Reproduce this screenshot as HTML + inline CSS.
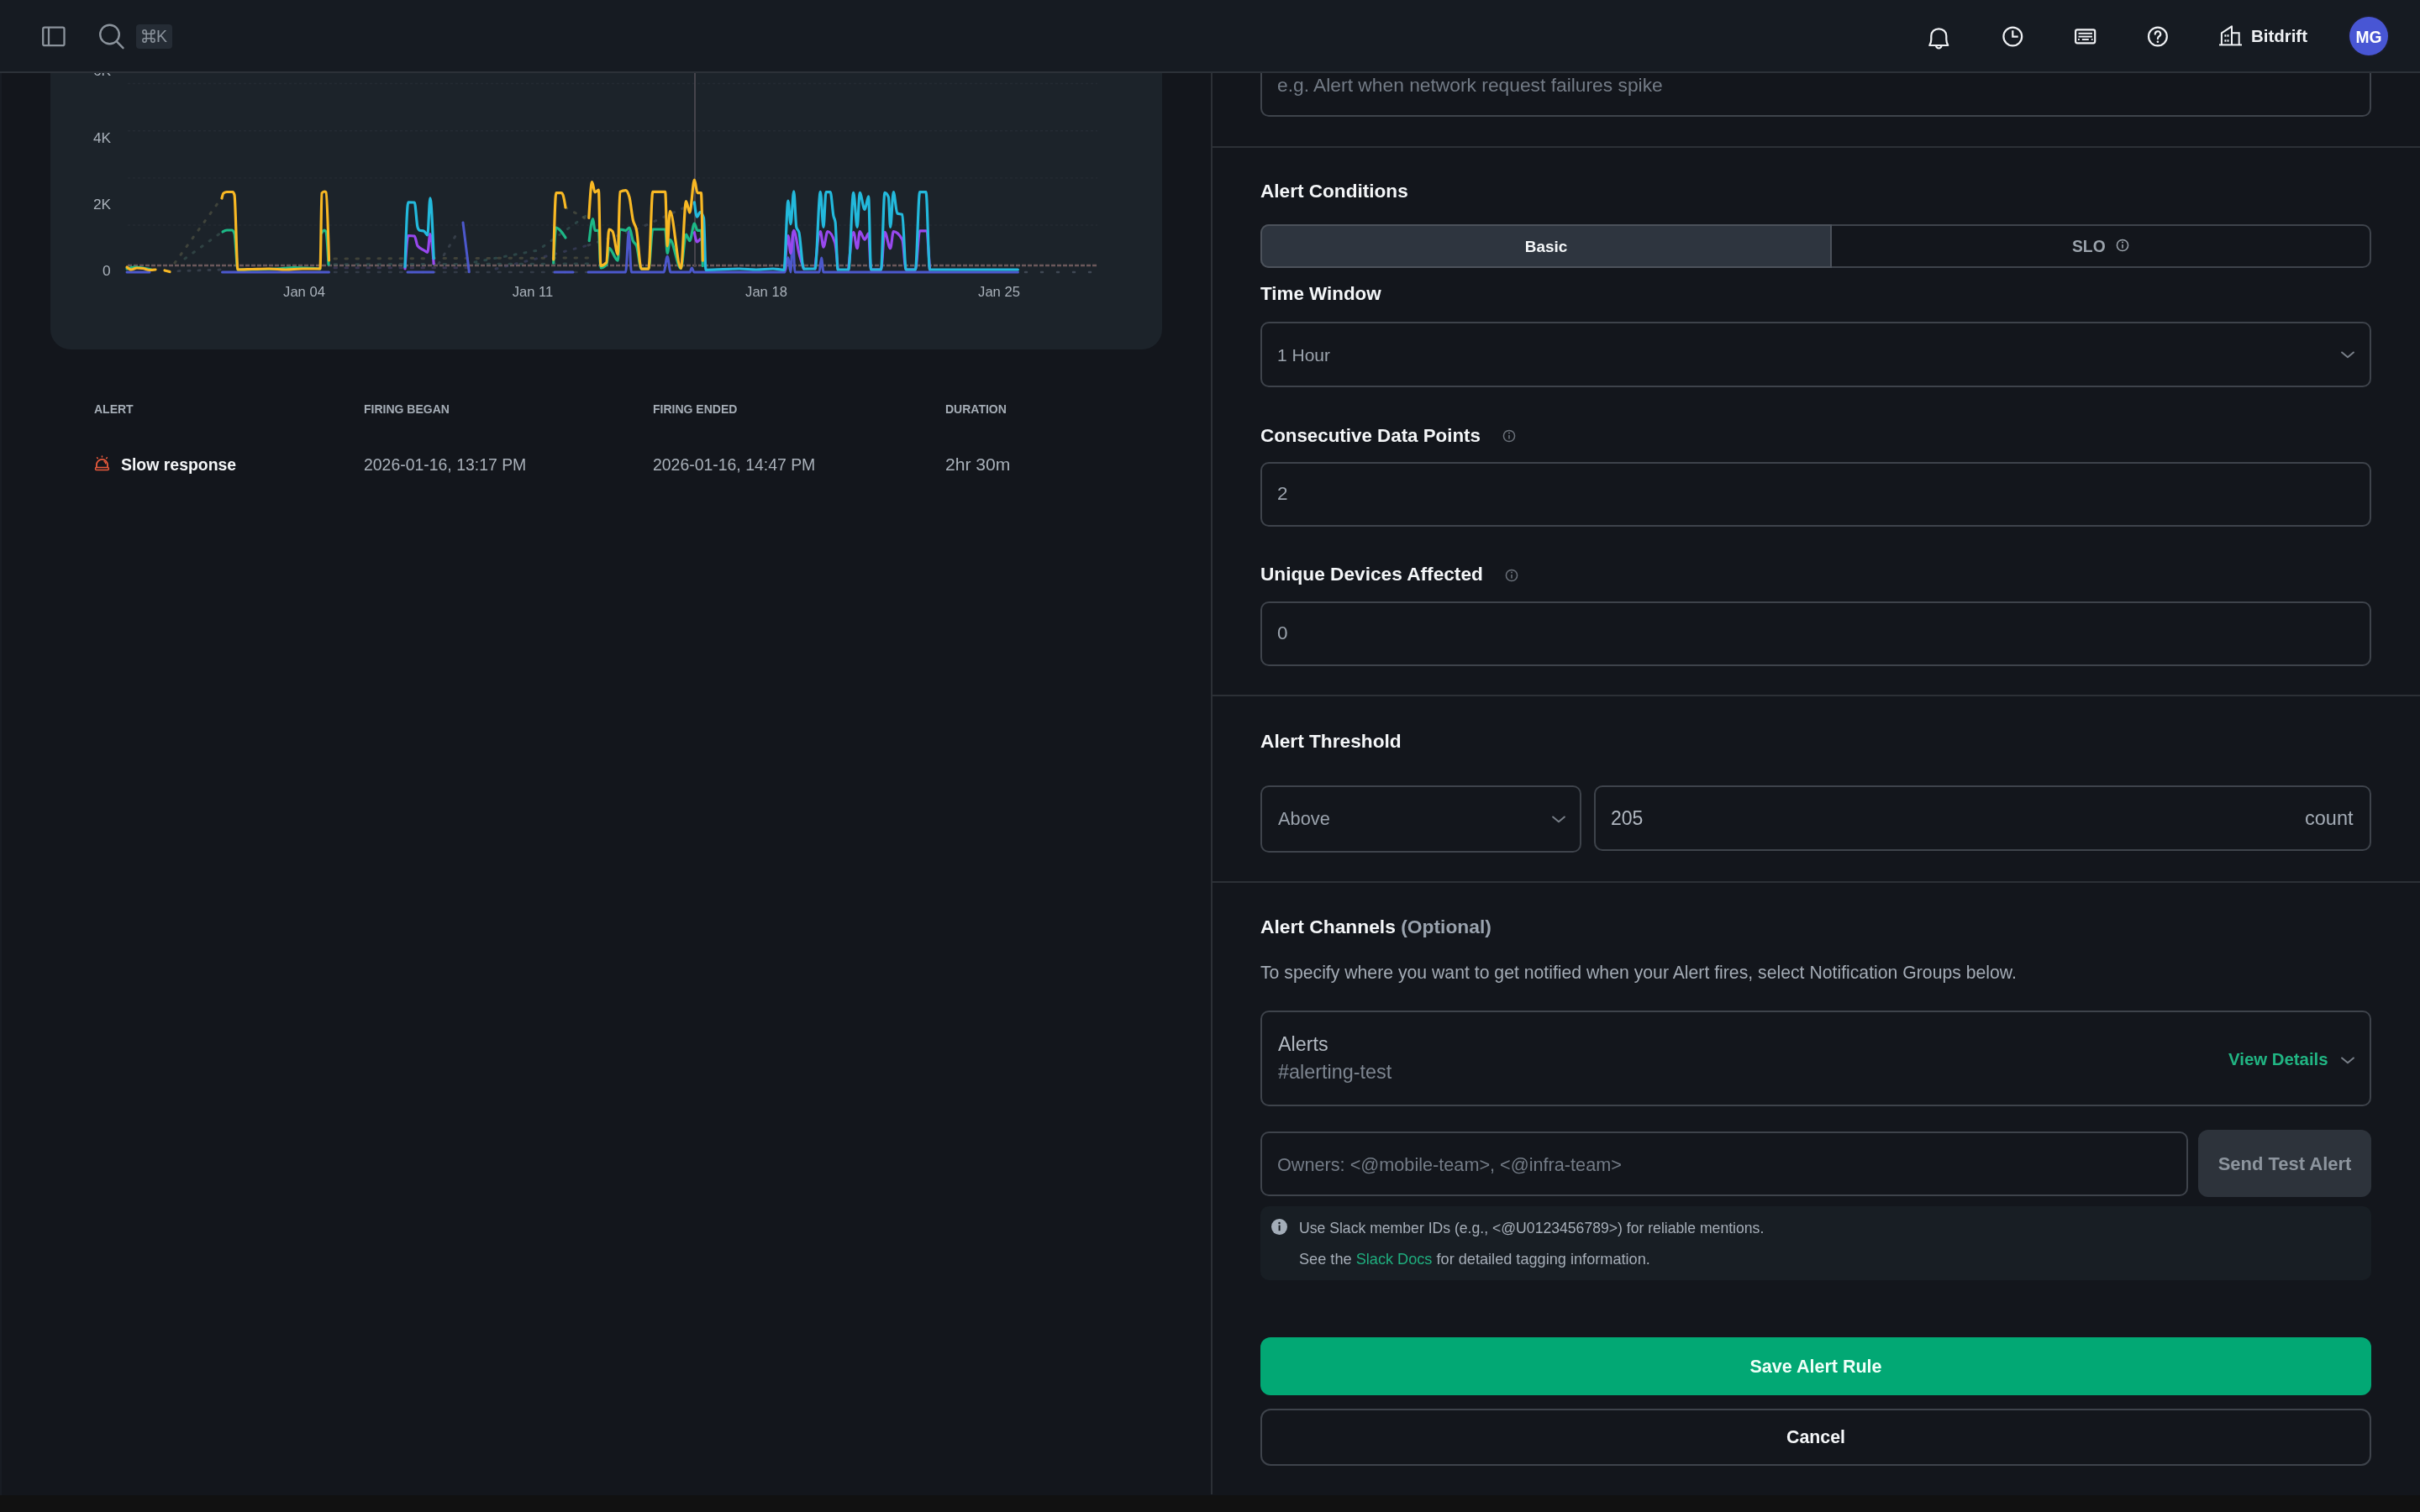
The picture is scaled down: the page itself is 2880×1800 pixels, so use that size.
<!DOCTYPE html>
<html><head><meta charset="utf-8"><style>
html,body{margin:0;padding:0;}
body{width:2880px;height:1800px;overflow:hidden;position:relative;background:#13161c;font-family:"Liberation Sans",sans-serif;}
.t{position:absolute;white-space:nowrap;line-height:1;will-change:transform;}
svg{position:absolute;overflow:visible;}
@media (max-width:2000px){html{zoom:0.5;}}
</style></head><body>
<div style="position:absolute;left:59.5px;top:-100px;width:1323.5px;height:516px;box-sizing:border-box;background:#1c232a;border-radius:24px;"></div>
<svg style="left:0;top:0" width="2880" height="1800" viewBox="0 0 2880 1800">
<line x1="152" y1="99.5" x2="1306" y2="99.5" stroke="#242b33" stroke-width="1.4" stroke-dasharray="3 3"/>
<line x1="152" y1="155.7" x2="1306" y2="155.7" stroke="#242b33" stroke-width="1.4" stroke-dasharray="3 3"/>
<line x1="152" y1="211.9" x2="1306" y2="211.9" stroke="#242b33" stroke-width="1.4" stroke-dasharray="3 3"/>
<line x1="152" y1="268" x2="1306" y2="268" stroke="#242b33" stroke-width="1.4" stroke-dasharray="3 3"/>
<line x1="152" y1="316" x2="1306" y2="316" stroke="#6b585b" stroke-width="2.3" stroke-dasharray="5 2"/>
<line x1="827" y1="86" x2="827" y2="318" stroke="#46444c" stroke-width="2"/>
<polyline points="208,313 262,238" fill="none" stroke="#5c5e48" stroke-width="3" stroke-linejoin="round" stroke-linecap="round" stroke-dasharray="2 10" opacity="0.55"/>
<polyline points="220,308 263,277" fill="none" stroke="#3f5c58" stroke-width="3" stroke-linejoin="round" stroke-linecap="round" stroke-dasharray="2 10" opacity="0.55"/>
<polyline points="200,323 264,321" fill="none" stroke="#4a5362" stroke-width="3" stroke-linejoin="round" stroke-linecap="round" stroke-dasharray="2 10" opacity="0.55"/>
<polyline points="398,308 700,307" fill="none" stroke="#5f5d45" stroke-width="3" stroke-linejoin="round" stroke-linecap="round" stroke-dasharray="2.5 10.5" opacity="0.55"/>
<polyline points="398,314.8 700,314" fill="none" stroke="#3c5f5c" stroke-width="3" stroke-linejoin="round" stroke-linecap="round" stroke-dasharray="2.5 10.5" opacity="0.55"/>
<polyline points="398,318.8 560,318.8" fill="none" stroke="#4f4670" stroke-width="3" stroke-linejoin="round" stroke-linecap="round" stroke-dasharray="2.5 10.5" opacity="0.55"/>
<polyline points="398,324 700,324" fill="none" stroke="#464f5c" stroke-width="2.6" stroke-linejoin="round" stroke-linecap="round" stroke-dasharray="2.5 10.5" opacity="0.55"/>
<polyline points="522,314 545,276" fill="none" stroke="#4a5461" stroke-width="3" stroke-linejoin="round" stroke-linecap="round" stroke-dasharray="2 10" opacity="0.55"/>
<polyline points="565,312 640,298 700,255" fill="none" stroke="#3b625e" stroke-width="3" stroke-linejoin="round" stroke-linecap="round" stroke-dasharray="2 10" opacity="0.55"/>
<polyline points="590,320 650,305 700,292" fill="none" stroke="#45496e" stroke-width="3" stroke-linejoin="round" stroke-linecap="round" stroke-dasharray="2 10" opacity="0.55"/>
<polyline points="700,292 760,272 830,240" fill="none" stroke="#4a5461" stroke-width="3" stroke-linejoin="round" stroke-linecap="round" stroke-dasharray="2 10" opacity="0.55"/>
<polyline points="673,247 700,262" fill="none" stroke="#5c5e48" stroke-width="3" stroke-linejoin="round" stroke-linecap="round" stroke-dasharray="2 10" opacity="0.55"/>
<polyline points="1220,324 1300,324" fill="none" stroke="#566170" stroke-width="2.5" stroke-linejoin="round" stroke-linecap="round" stroke-dasharray="2 17" opacity="0.6"/>
<path d="M151.00,324.00 L178.00,324.00" fill="none" stroke="#4c58cc" stroke-width="3.0" stroke-linejoin="round" stroke-linecap="round" />
<path d="M264.50,324.00 L391.50,324.00" fill="none" stroke="#4c58cc" stroke-width="3.0" stroke-linejoin="round" stroke-linecap="round" />
<path d="M485.00,324.00 L516.00,324.00" fill="none" stroke="#4c58cc" stroke-width="3.0" stroke-linejoin="round" stroke-linecap="round" />
<path d="M551.00,265.00 L558.30,323.80" fill="none" stroke="#4c58cc" stroke-width="3.0" stroke-linejoin="round" stroke-linecap="round" />
<path d="M660.00,324.00 L682.00,324.00" fill="none" stroke="#4c58cc" stroke-width="3.0" stroke-linejoin="round" stroke-linecap="round" />
<path d="M700.00,324.00 C714.87,324.00 729.73,324.00 744.60,324.00 C745.83,324.00 747.07,275.50 748.30,275.50 C749.33,275.50 750.37,324.00 751.40,324.00 C764.27,324.00 777.13,324.00 790.00,324.00 C791.40,324.00 792.80,305.20 794.20,305.20 C795.47,305.20 796.73,324.00 798.00,324.00 C805.67,324.00 813.33,324.00 821.00,324.00 C821.77,324.00 822.53,319.00 823.30,319.00 C824.20,319.00 825.10,324.00 826.00,324.00 C862.00,324.00 898.00,324.00 934.00,324.00 C935.30,324.00 936.60,306.50 937.90,306.50 C938.93,306.50 939.97,324.00 941.00,324.00 C941.83,324.00 942.67,276.00 943.50,276.00 C944.33,276.00 945.17,324.00 946.00,324.00 C955.67,324.00 965.33,324.00 975.00,324.00 C975.87,324.00 976.73,307.00 977.60,307.00 C978.40,307.00 979.20,324.00 980.00,324.00 C1057.13,324.00 1134.27,324.00 1211.40,324.00" fill="none" stroke="#4c58cc" stroke-width="3.0" stroke-linejoin="round" stroke-linecap="round" />
<path d="M482.00,320.00 C483.27,300.25 484.53,280.50 485.80,280.50 C488.30,280.50 490.80,280.67 493.30,281.00 C494.53,281.16 495.77,291.13 497.00,292.80 C499.47,296.13 501.93,296.30 504.40,297.80 C505.87,298.69 507.33,300.30 508.80,300.30 C509.83,300.30 510.87,278.60 511.90,278.60 C513.33,278.60 514.77,296.30 516.20,314.00" fill="none" stroke="#9848ee" stroke-width="3.2" stroke-linejoin="round" stroke-linecap="round" />
<path d="M826.40,276.70 C827.43,282.30 828.47,287.90 829.50,287.90 C830.73,287.90 831.97,286.35 833.20,284.80" fill="none" stroke="#9848ee" stroke-width="3.2" stroke-linejoin="round" stroke-linecap="round" />
<path d="M934.00,321.00 C935.30,300.75 936.60,280.50 937.90,280.50 C938.93,280.50 939.97,301.50 941.00,301.50 C942.23,301.50 943.47,274.30 944.70,274.30 C946.77,274.30 948.83,293.61 950.90,301.50 C952.77,308.63 954.63,314.31 956.50,320.00" fill="none" stroke="#9848ee" stroke-width="3.2" stroke-linejoin="round" stroke-linecap="round" />
<path d="M970.00,320.00 C972.10,297.75 974.20,275.50 976.30,275.50 C977.53,275.50 978.77,294.10 980.00,294.10 C981.67,294.10 983.33,275.50 985.00,275.50 C987.90,275.50 990.80,280.03 993.70,289.10 C994.83,292.64 995.97,306.32 997.10,320.00" fill="none" stroke="#9848ee" stroke-width="3.2" stroke-linejoin="round" stroke-linecap="round" />
<path d="M1009.80,321.00 C1011.77,298.65 1013.73,276.30 1015.70,276.30 C1017.20,276.30 1018.70,295.70 1020.20,295.70 C1021.20,295.70 1022.20,275.60 1023.20,275.60 C1025.17,275.60 1027.13,285.20 1029.10,285.20 C1030.60,285.20 1032.10,277.80 1033.60,277.80 C1034.57,277.80 1035.53,321.00 1036.50,321.00 C1040.50,321.00 1044.50,321.00 1048.50,321.00 C1049.97,321.00 1051.43,276.30 1052.90,276.30 C1055.13,276.30 1057.37,295.70 1059.60,295.70 C1060.83,295.70 1062.07,275.60 1063.30,275.60 C1066.80,275.60 1070.30,278.80 1073.80,285.20 C1075.27,287.88 1076.73,321.00 1078.20,321.00 C1081.93,321.00 1085.67,321.00 1089.40,321.00 C1091.13,321.00 1092.87,274.80 1094.60,274.80 C1097.07,274.80 1099.53,274.80 1102.00,274.80 C1103.50,274.80 1105.00,297.90 1106.50,321.00" fill="none" stroke="#9848ee" stroke-width="3.2" stroke-linejoin="round" stroke-linecap="round" />
<path d="M482.00,317.60 C483.27,279.20 484.53,240.80 485.80,240.80 C488.30,240.80 490.80,240.87 493.30,241.00 C494.53,241.07 495.77,266.75 497.00,270.50 C497.83,273.03 498.67,274.06 499.50,274.30 C501.13,274.77 502.77,274.53 504.40,275.00 C505.87,275.42 507.33,279.80 508.80,279.80 C509.83,279.80 510.87,235.80 511.90,235.80 C513.33,235.80 514.77,271.75 516.20,307.70" fill="none" stroke="#23b9dc" stroke-width="3.2" stroke-linejoin="round" stroke-linecap="round" />
<path d="M826.40,240.80 C827.43,249.50 828.47,258.20 829.50,258.20 C830.73,258.20 831.97,252.60 833.20,252.60 C834.63,252.60 836.07,254.87 837.50,259.40 C838.33,262.04 839.17,321.30 840.00,321.30 C853.33,321.30 866.67,320.00 880.00,320.00 C886.67,320.00 893.33,321.00 900.00,321.00 C906.67,321.00 913.33,320.00 920.00,320.00 C924.33,320.00 928.67,321.30 933.00,321.30 C934.63,321.30 936.27,239.00 937.90,239.00 C938.93,239.00 939.97,266.80 941.00,266.80 C942.23,266.80 943.47,227.80 944.70,227.80 C945.73,227.80 946.77,266.37 947.80,270.50 C948.83,274.63 949.87,272.57 950.90,276.70 C952.77,284.17 954.63,320.10 956.50,320.10 C961.00,320.10 965.50,320.07 970.00,320.00 C972.10,319.97 974.20,228.40 976.30,228.40 C977.53,228.40 978.77,270.50 980.00,270.50 C981.00,270.50 982.00,228.70 983.00,228.70 C984.73,228.70 986.47,228.70 988.20,228.70 C989.43,228.70 990.67,250.88 991.90,257.00 C992.63,260.64 993.37,259.47 994.10,264.40 C995.10,271.13 996.10,321.00 997.10,321.00 C1001.33,321.00 1005.57,321.00 1009.80,321.00 C1011.77,321.00 1013.73,229.40 1015.70,229.40 C1017.20,229.40 1018.70,270.40 1020.20,270.40 C1021.20,270.40 1022.20,229.40 1023.20,229.40 C1025.17,229.40 1027.13,249.50 1029.10,249.50 C1030.60,249.50 1032.10,233.90 1033.60,233.90 C1034.57,233.90 1035.53,321.00 1036.50,321.00 C1040.50,321.00 1044.50,321.00 1048.50,321.00 C1049.97,321.00 1051.43,229.40 1052.90,229.40 C1054.40,229.40 1055.90,231.13 1057.40,234.60 C1058.13,236.29 1058.87,270.40 1059.60,270.40 C1060.83,270.40 1062.07,228.70 1063.30,228.70 C1064.80,228.70 1066.30,253.25 1067.80,254.00 C1069.80,255.00 1071.80,254.50 1073.80,255.50 C1075.27,256.23 1076.73,321.00 1078.20,321.00 C1081.93,321.00 1085.67,321.00 1089.40,321.00 C1091.13,321.00 1092.87,228.70 1094.60,228.70 C1097.07,228.70 1099.53,228.70 1102.00,228.70 C1103.50,228.70 1105.00,321.00 1106.50,321.00 C1141.47,321.00 1176.43,321.00 1211.40,321.00" fill="none" stroke="#23b9dc" stroke-width="3.2" stroke-linejoin="round" stroke-linecap="round" />
<path d="M151.00,320.00 C154.00,319.00 157.00,318.00 160.00,318.00 C163.33,318.00 166.67,318.50 170.00,319.00 C173.33,319.50 176.67,320.25 180.00,321.00" fill="none" stroke="#1db886" stroke-width="3.2" stroke-linejoin="round" stroke-linecap="round" />
<path d="M265.00,276.00 C266.67,275.00 268.33,274.00 270.00,274.00 C272.00,274.00 274.00,274.00 276.00,274.00 C277.00,274.00 278.00,275.33 279.00,278.00 C280.33,281.56 281.67,321.00 283.00,321.00 C298.67,321.00 314.33,320.67 330.00,320.00 C336.67,319.72 343.33,318.50 350.00,318.50 C360.33,318.50 370.67,319.25 381.00,320.00" fill="none" stroke="#1db886" stroke-width="3.2" stroke-linejoin="round" stroke-linecap="round" />
<path d="M383.00,277.00 C384.00,275.50 385.00,274.00 386.00,274.00 C386.67,274.00 387.33,274.67 388.00,276.00 C389.00,278.00 390.00,296.50 391.00,315.00" fill="none" stroke="#1db886" stroke-width="3.2" stroke-linejoin="round" stroke-linecap="round" />
<path d="M658.70,313.00 C659.73,292.00 660.77,271.00 661.80,271.00 C663.47,271.00 665.13,272.65 666.80,274.30 C668.87,276.35 670.93,279.67 673.00,283.00" fill="none" stroke="#1db886" stroke-width="3.2" stroke-linejoin="round" stroke-linecap="round" />
<path d="M701.20,286.70 C702.67,273.65 704.13,260.60 705.60,260.60 C706.40,260.60 707.20,274.30 708.00,274.30 C709.47,274.30 710.93,274.30 712.40,274.30 C713.23,274.30 714.07,318.90 714.90,318.90 C717.17,318.90 719.43,317.67 721.70,315.20 C722.73,314.08 723.77,295.30 724.80,295.30 C728.30,295.30 731.80,310.20 735.30,310.20 C736.13,310.20 736.97,273.00 737.80,273.00 C740.07,273.00 742.33,274.30 744.60,274.30 C746.07,274.30 747.53,271.20 749.00,271.20 C750.43,271.20 751.87,283.08 753.30,286.70 C754.73,290.32 756.17,288.77 757.60,292.90 C759.47,298.28 761.33,320.00 763.20,320.00 C766.10,320.00 769.00,320.00 771.90,320.00 C773.53,320.00 775.17,273.00 776.80,273.00 C781.77,273.00 786.73,273.00 791.70,273.00 C792.53,273.00 793.37,301.50 794.20,301.50 C795.23,301.50 796.27,285.40 797.30,285.40 C801.63,285.40 805.97,319.50 810.30,319.50 C812.37,319.50 814.43,279.20 816.50,279.20 C817.93,279.20 819.37,286.70 820.80,286.70 C822.67,286.70 824.53,266.20 826.40,266.20 C827.63,266.20 828.87,274.30 830.10,274.30 C831.53,274.30 832.97,274.30 834.40,274.30 C835.03,274.30 835.67,295.35 836.30,316.40" fill="none" stroke="#1db886" stroke-width="3.2" stroke-linejoin="round" stroke-linecap="round" />
<path d="M151.00,318.00 C152.67,319.50 154.33,321.00 156.00,321.00 C158.33,321.00 160.67,319.00 163.00,319.00 C165.33,319.00 167.67,319.17 170.00,319.50 C172.67,319.88 175.33,321.50 178.00,321.50 C180.33,321.50 182.67,321.25 185.00,321.00" fill="none" stroke="#f8b824" stroke-width="3.2" stroke-linejoin="round" stroke-linecap="round" />
<path d="M196.00,322.00 L202.00,323.50" fill="none" stroke="#f8b824" stroke-width="3.2" stroke-linejoin="round" stroke-linecap="round" />
<path d="M264.00,236.00 C264.67,233.25 265.33,230.50 266.00,230.00 C267.33,229.00 268.67,228.50 270.00,228.50 C272.33,228.50 274.67,228.50 277.00,228.50 C277.67,228.50 278.33,229.67 279.00,232.00 C280.33,236.67 281.67,321.00 283.00,321.00 C288.67,321.00 294.33,320.66 300.00,320.50 C306.67,320.32 313.33,320.00 320.00,320.00 C326.67,320.00 333.33,321.00 340.00,321.00 C346.67,321.00 353.33,320.00 360.00,320.00 C367.00,320.00 374.00,320.00 381.00,320.00 C381.67,320.00 382.33,230.89 383.00,230.00 C384.00,228.67 385.00,228.00 386.00,228.00 C386.67,228.00 387.33,228.33 388.00,229.00 C389.17,230.17 390.33,270.08 391.50,310.00" fill="none" stroke="#f8b824" stroke-width="3.2" stroke-linejoin="round" stroke-linecap="round" />
<path d="M658.70,309.00 C659.73,269.30 660.77,229.60 661.80,229.60 C663.87,229.60 665.93,229.60 668.00,229.60 C668.67,229.60 669.33,230.40 670.00,232.00 C671.00,234.40 672.00,240.70 673.00,247.00" fill="none" stroke="#f8b824" stroke-width="3.2" stroke-linejoin="round" stroke-linecap="round" />
<path d="M700.80,259.40 C702.07,238.00 703.33,216.60 704.60,216.60 C705.73,216.60 706.87,229.00 708.00,229.00 C709.47,229.00 710.93,226.00 712.40,226.00 C713.23,226.00 714.07,316.40 714.90,316.40 C717.17,316.40 719.43,315.17 721.70,312.70 C722.73,311.58 723.77,273.00 724.80,273.00 C726.20,273.00 727.60,273.83 729.00,275.50 C731.10,278.00 733.20,302.80 735.30,302.80 C736.13,302.80 736.97,228.84 737.80,228.40 C740.07,227.20 742.33,226.60 744.60,226.60 C746.07,226.60 747.53,229.27 749.00,234.60 C750.43,239.81 751.87,255.28 753.30,261.90 C754.73,268.52 756.17,266.87 757.60,274.30 C759.47,283.98 761.33,320.10 763.20,320.10 C766.10,320.10 769.00,320.10 771.90,320.10 C773.53,320.10 775.17,228.40 776.80,228.40 C781.77,228.40 786.73,228.40 791.70,228.40 C792.53,228.40 793.37,292.90 794.20,292.90 C795.23,292.90 796.27,251.30 797.30,251.30 C801.63,251.30 805.97,319.50 810.30,319.50 C812.37,319.50 814.43,239.60 816.50,239.60 C817.93,239.60 819.37,253.20 820.80,253.20 C822.67,253.20 824.53,214.20 826.40,214.20 C827.63,214.20 828.87,229.70 830.10,229.70 C831.53,229.70 832.97,229.70 834.40,229.70 C835.03,229.70 835.67,269.95 836.30,310.20" fill="none" stroke="#f8b824" stroke-width="3.2" stroke-linejoin="round" stroke-linecap="round" />
</svg>
<div class="t" style="right:2748px;top:75.86px;font-size:17.3px;font-weight:400;color:#a9b1ba;">6K</div>
<div class="t" style="right:2748px;top:155.56px;font-size:17.3px;font-weight:400;color:#a9b1ba;">4K</div>
<div class="t" style="right:2748px;top:234.96px;font-size:17.3px;font-weight:400;color:#a9b1ba;">2K</div>
<div class="t" style="right:2748px;top:313.96px;font-size:17.3px;font-weight:400;color:#a9b1ba;">0</div>
<div class="t" style="left:362px;transform:translateX(-50%);top:340.35px;font-size:16.6px;font-weight:400;color:#a9b1ba;">Jan 04</div>
<div class="t" style="left:634px;transform:translateX(-50%);top:340.35px;font-size:16.6px;font-weight:400;color:#a9b1ba;">Jan 11</div>
<div class="t" style="left:911.5px;transform:translateX(-50%);top:340.35px;font-size:16.6px;font-weight:400;color:#a9b1ba;">Jan 18</div>
<div class="t" style="left:1188.7px;transform:translateX(-50%);top:340.35px;font-size:16.6px;font-weight:400;color:#a9b1ba;">Jan 25</div>
<div class="t" style="left:111.7px;top:480.15px;font-size:14px;font-weight:700;color:#a5adb6;">ALERT</div>
<div class="t" style="left:433.3px;top:480.15px;font-size:14px;font-weight:700;color:#a5adb6;">FIRING BEGAN</div>
<div class="t" style="left:777.4px;top:480.15px;font-size:14px;font-weight:700;color:#a5adb6;">FIRING ENDED</div>
<div class="t" style="left:1125.4px;top:480.15px;font-size:14px;font-weight:700;color:#a5adb6;">DURATION</div>
<div class="t" style="left:144px;top:543.84px;font-size:19.45px;font-weight:700;color:#f4f6f8;">Slow response</div>
<div class="t" style="left:433.3px;top:543.85px;font-size:19.43px;font-weight:400;color:#a9b1ba;">2026-01-16, 13:17 PM</div>
<div class="t" style="left:777.4px;top:543.85px;font-size:19.43px;font-weight:400;color:#a9b1ba;">2026-01-16, 14:47 PM</div>
<div class="t" style="left:1125.4px;top:542.44px;font-size:21.1px;font-weight:400;color:#a9b1ba;">2hr 30m</div>
<svg style="left:110px;top:540px" width="24" height="24" viewBox="0 0 24 24">
<path d="M4.9 16.4 V13.5 A6.55 6.55 0 0 1 18 13.5 V16.4" fill="none" stroke="#e85a3c" stroke-width="1.8"/>
<path d="M13.6 9.2 a3.6 3.6 0 0 1 2.3 3.2" fill="none" stroke="#e85a3c" stroke-width="1.4"/>
<rect x="3.6" y="16.6" width="15.7" height="3" rx="1" fill="none" stroke="#e85a3c" stroke-width="1.5"/>
<path d="M11.45 3 v0.9 M5.6 4.9 l0.6 0.7 M17.3 4.9 l-0.6 0.7" stroke="#e85a3c" stroke-width="1.6" stroke-linecap="round"/>
</svg>
<div style="position:absolute;left:0;top:0;width:2880px;height:87px;z-index:5"><div style="position:absolute;left:0px;top:0px;width:2880px;height:87px;box-sizing:border-box;background:#161b22;border-bottom:2px solid #2c3138;"></div>
<svg style="left:48px;top:29px" width="32" height="28" viewBox="0 0 32 28">
<rect x="3.2" y="3.7" width="25.3" height="21.5" rx="2" fill="none" stroke="#8b939c" stroke-width="2.3"/>
<line x1="10" y1="3.7" x2="10" y2="25.2" stroke="#8b939c" stroke-width="2.3"/>
</svg>
<svg style="left:116px;top:27px" width="34" height="34" viewBox="0 0 34 34">
<circle cx="14.5" cy="14" r="11.3" fill="none" stroke="#8b939c" stroke-width="2.4"/>
<line x1="22.6" y1="22.2" x2="30.5" y2="30.2" stroke="#8b939c" stroke-width="2.4" stroke-linecap="round"/>
</svg>
<div style="position:absolute;left:162px;top:29px;width:43px;height:29px;box-sizing:border-box;background:#252c35;border-radius:4px;"></div>
<svg style="left:168.5px;top:35px" width="16" height="16" viewBox="0 0 17 17">
<path d="M5.5 5.5 H11.5 V11.5 H5.5 Z M5.5 5.5 V3.2 A2.3 2.3 0 1 0 3.2 5.5 H5.5 M11.5 5.5 V3.2 A2.3 2.3 0 1 1 13.8 5.5 H11.5 M11.5 11.5 V13.8 A2.3 2.3 0 1 0 13.8 11.5 H11.5 M5.5 11.5 V13.8 A2.3 2.3 0 1 1 3.2 11.5 H5.5" fill="none" stroke="#8b939c" stroke-width="1.6"/>
</svg>
<div class="t" style="left:186px;top:34.49px;font-size:19.5px;font-weight:400;color:#8b939c;">K</div>
<svg style="left:2290px;top:28px" width="36" height="36" viewBox="0 0 36 36">
<path d="M6.3 26 H28.3 C27 24 26.3 22 26.3 19 V14.8 C26.3 9.8 22.4 6.3 17.3 6.3 C12.2 6.3 8.3 9.8 8.3 14.8 V19 C8.3 22 7.6 24 6.3 26 Z" fill="none" stroke="#eef0f3" stroke-width="2.2" stroke-linejoin="round"/>
<path d="M14.1 26.3 A3.2 3.2 0 0 0 20.5 26.3" fill="none" stroke="#eef0f3" stroke-width="2.2"/>
</svg>
<svg style="left:2380px;top:28px" width="32" height="32" viewBox="0 0 32 32">
<circle cx="15.3" cy="15.5" r="10.9" fill="none" stroke="#eef0f3" stroke-width="2.2"/>
<path d="M15.3 8.2 V15.6 H21.7" fill="none" stroke="#eef0f3" stroke-width="2.2"/>
</svg>
<svg style="left:2466px;top:30px" width="32" height="26" viewBox="0 0 32 26">
<rect x="4.1" y="5.4" width="23.1" height="15.9" rx="2" fill="none" stroke="#eef0f3" stroke-width="2.2"/>
<line x1="7.5" y1="9.8" x2="24" y2="9.8" stroke="#eef0f3" stroke-width="1.9"/>
<line x1="7.5" y1="13.6" x2="24" y2="13.6" stroke="#eef0f3" stroke-width="1.9"/>
<line x1="7" y1="17" x2="8.8" y2="17" stroke="#eef0f3" stroke-width="1.9"/>
<line x1="11.8" y1="17" x2="19.8" y2="17" stroke="#eef0f3" stroke-width="1.9"/>
<line x1="22.8" y1="17" x2="24.6" y2="17" stroke="#eef0f3" stroke-width="1.9"/>
</svg>
<svg style="left:2552px;top:28px" width="32" height="32" viewBox="0 0 32 32">
<circle cx="15.9" cy="15.5" r="10.9" fill="none" stroke="#eef0f3" stroke-width="2.2"/>
<path d="M12.8 12.6 A3.2 3.2 0 1 1 17.5 15.3 C16.4 16 15.9 16.7 15.9 18.2" fill="none" stroke="#eef0f3" stroke-width="2.2" stroke-linecap="round"/>
<circle cx="15.9" cy="21.8" r="1.3" fill="#eef0f3"/>
</svg>
<svg style="left:2638px;top:28px" width="32" height="30" viewBox="0 0 32 30">
<path d="M3 25.4 H30" stroke="#eef0f3" stroke-width="2" />
<path d="M5.9 25.4 V11.3 L18 3.3 V25.4" fill="none" stroke="#eef0f3" stroke-width="2" stroke-linejoin="round"/>
<path d="M18 11.3 H26.7 V25.4" fill="none" stroke="#eef0f3" stroke-width="2"/>
<rect x="9.4" y="13.2" width="2" height="2.5" fill="#eef0f3"/><rect x="12.5" y="13.2" width="2" height="2.5" fill="#eef0f3"/>
<rect x="9.4" y="19.2" width="2" height="2.5" fill="#eef0f3"/><rect x="12.5" y="19.2" width="2" height="2.5" fill="#eef0f3"/>
</svg>
<div class="t" style="left:2678.6px;top:33.39px;font-size:20.45px;font-weight:700;color:#eef0f3;">Bitdrift</div>
<div style="position:absolute;left:2795.8px;top:19.9px;width:46.4px;height:46.4px;border-radius:50%;background:#4856d4;box-shadow:0 0 0 2px #1a1d2a;"></div>
<div class="t" style="left:2819.3px;transform:translateX(-50%);top:35.16px;font-size:19.3px;font-weight:700;color:#ffffff;">MG</div>
</div><div style="position:absolute;left:1441px;top:87px;width:2px;height:1692px;box-sizing:border-box;background:#2c3036;"></div>
<div style="position:absolute;left:1500px;top:-50px;width:1322px;height:189px;box-sizing:border-box;border:2px solid #3e434b;border-radius:10px;background:transparent;"></div>
<div class="t" style="left:1520px;top:89.7px;font-size:22.8px;font-weight:400;color:#737b86;">e.g. Alert when network request failures spike</div>
<div style="position:absolute;left:1443px;top:174px;width:1437px;height:2px;box-sizing:border-box;background:#2c3036;"></div>
<div class="t" style="left:1500px;top:217.37px;font-size:22.6px;font-weight:700;color:#f4f6f8;">Alert Conditions</div>
<div style="position:absolute;left:1500px;top:267px;width:1322px;height:52px;box-sizing:border-box;border:2px solid #3e434b;border-radius:10px;"></div>
<div style="position:absolute;left:1500px;top:267px;width:680px;height:52px;box-sizing:border-box;background:#2e353f;border:2px solid #4c525b;border-radius:10px 0 0 10px;"></div>
<div class="t" style="left:1839.6px;transform:translateX(-50%);top:284.7px;font-size:18.9px;font-weight:700;color:#f4f6f8;">Basic</div>
<div class="t" style="left:2465.7px;top:284.36px;font-size:19.3px;font-weight:700;color:#9ba3ac;">SLO</div>
<svg style="left:2517px;top:283.4px" width="18" height="18" viewBox="0 0 18 18"><circle cx="9" cy="9" r="6.6" fill="none" stroke="#9ba3ac" stroke-width="1.5"/><line x1="9" y1="8" x2="9" y2="12.5" stroke="#9ba3ac" stroke-width="1.6"/><circle cx="9" cy="5.6" r="1" fill="#9ba3ac"/></svg>
<div class="t" style="left:1500px;top:339.04px;font-size:22.4px;font-weight:700;color:#f4f6f8;">Time Window</div>
<div style="position:absolute;left:1500px;top:382.6px;width:1322px;height:78.39999999999998px;box-sizing:border-box;border:2px solid #3e434b;border-radius:10px;background:transparent;"></div>
<div class="t" style="left:1520px;top:412.22px;font-size:21px;font-weight:400;color:#9ba3ad;">1 Hour</div>
<svg style="left:2785.4px;top:416.4px" width="18" height="12" viewBox="0 0 18 12"><path d="M2.1 3.5 L9 9.3 L15.9 3.5" fill="none" stroke="#787f88" stroke-width="2" stroke-linecap="round" stroke-linejoin="round"/></svg>
<div class="t" style="left:1500px;top:507.58px;font-size:22.35px;font-weight:700;color:#f4f6f8;">Consecutive Data Points</div>
<svg style="left:1787px;top:510px" width="18" height="18" viewBox="0 0 18 18"><circle cx="9" cy="9" r="6.6" fill="none" stroke="#6a7079" stroke-width="1.5"/><line x1="9" y1="8" x2="9" y2="12.5" stroke="#6a7079" stroke-width="1.6"/><circle cx="9" cy="5.6" r="1" fill="#6a7079"/></svg>
<div style="position:absolute;left:1500px;top:549.7px;width:1322px;height:77.69999999999993px;box-sizing:border-box;border:2px solid #3e434b;border-radius:10px;background:transparent;"></div>
<div class="t" style="left:1520px;top:576.95px;font-size:22.5px;font-weight:400;color:#9ba3ad;">2</div>
<div class="t" style="left:1500px;top:672.41px;font-size:22.67px;font-weight:700;color:#f4f6f8;">Unique Devices Affected</div>
<svg style="left:1790px;top:676px" width="18" height="18" viewBox="0 0 18 18"><circle cx="9" cy="9" r="6.6" fill="none" stroke="#6a7079" stroke-width="1.5"/><line x1="9" y1="8" x2="9" y2="12.5" stroke="#6a7079" stroke-width="1.6"/><circle cx="9" cy="5.6" r="1" fill="#6a7079"/></svg>
<div style="position:absolute;left:1500px;top:716px;width:1322px;height:76.5px;box-sizing:border-box;border:2px solid #3e434b;border-radius:10px;background:transparent;"></div>
<div class="t" style="left:1520px;top:742.95px;font-size:22.5px;font-weight:400;color:#9ba3ad;">0</div>
<div style="position:absolute;left:1443px;top:827px;width:1437px;height:2px;box-sizing:border-box;background:#2c3036;"></div>
<div class="t" style="left:1500px;top:870.78px;font-size:22.7px;font-weight:700;color:#f4f6f8;">Alert Threshold</div>
<div style="position:absolute;left:1500px;top:935px;width:381.5999999999999px;height:79.70000000000005px;box-sizing:border-box;border:2px solid #3e434b;border-radius:10px;background:transparent;"></div>
<div class="t" style="left:1520.8px;top:964.15px;font-size:21.8px;font-weight:400;color:#9ba3ad;">Above</div>
<svg style="left:1845.7px;top:969px" width="18" height="12" viewBox="0 0 18 12"><path d="M2.1 3.5 L9 9.3 L15.9 3.5" fill="none" stroke="#787f88" stroke-width="2" stroke-linecap="round" stroke-linejoin="round"/></svg>
<div style="position:absolute;left:1897px;top:935px;width:925px;height:77.5px;box-sizing:border-box;border:2px solid #3e434b;border-radius:10px;background:transparent;"></div>
<div class="t" style="left:1916.8px;top:963.13px;font-size:23.0px;font-weight:400;color:#b0b7c0;">205</div>
<div class="t" style="right:79.5px;top:962.71px;font-size:23.5px;font-weight:400;color:#a4acb6;">count</div>
<div style="position:absolute;left:1443px;top:1049px;width:1437px;height:2px;box-sizing:border-box;background:#2c3036;"></div>
<div class="t" style="left:1500px;top:1091.7px;font-size:22.8px;font-weight:700;color:#f4f6f8;">Alert Channels <span style="color:#9aa3ae">(Optional)</span></div>
<div class="t" style="left:1500px;top:1147.44px;font-size:21.22px;font-weight:400;color:#a3abb5;">To specify where you want to get notified when your Alert fires, select Notification Groups below.</div>
<div style="position:absolute;left:1500px;top:1202.8px;width:1322px;height:114.20000000000005px;box-sizing:border-box;border:2px solid #3e434b;border-radius:10px;background:transparent;"></div>
<div class="t" style="left:1520.8px;top:1231.98px;font-size:23.3px;font-weight:400;color:#b3bac2;">Alerts</div>
<div class="t" style="left:1520.8px;top:1264.89px;font-size:23.4px;font-weight:400;color:#7d8590;">#alerting-test</div>
<div class="t" style="left:2652px;top:1251.23px;font-size:20.4px;font-weight:700;color:#21b583;">View Details</div>
<svg style="left:2785.4px;top:1255.5px" width="18" height="12" viewBox="0 0 18 12"><path d="M2.1 3.5 L9 9.3 L15.9 3.5" fill="none" stroke="#787f88" stroke-width="2" stroke-linecap="round" stroke-linejoin="round"/></svg>
<div style="position:absolute;left:1500px;top:1347px;width:1104px;height:77px;box-sizing:border-box;border:2px solid #3e434b;border-radius:10px;background:transparent;"></div>
<div class="t" style="left:1520px;top:1376.26px;font-size:21.66px;font-weight:400;color:#737b86;">Owners: &lt;@mobile-team&gt;, &lt;@infra-team&gt;</div>
<div style="position:absolute;left:2616px;top:1344.8px;width:206px;height:80.0px;box-sizing:border-box;background:#2d333b;border-radius:12px;"></div>
<div class="t" style="left:2719px;transform:translateX(-50%);top:1375.4px;font-size:21.97px;font-weight:700;color:#8d959e;">Send Test Alert</div>
<div style="position:absolute;left:1500px;top:1435.5px;width:1322px;height:88.0px;box-sizing:border-box;background:#181e24;border-radius:10px;"></div>
<svg style="left:1512px;top:1449.5px" width="21" height="21" viewBox="0 0 21 21"><circle cx="10.5" cy="10.5" r="9.5" fill="#a3adb8"/><rect x="9.6" y="8.6" width="2" height="6.6" fill="#181e24"/><circle cx="10.5" cy="6.1" r="1.25" fill="#181e24"/></svg>
<div class="t" style="left:1546px;top:1453.68px;font-size:17.63px;font-weight:400;color:#a6aeb8;">Use Slack member IDs (e.g., &lt;@U0123456789&gt;) for reliable mentions.</div>
<div class="t" style="left:1546px;top:1490.33px;font-size:18.16px;font-weight:400;color:#a6aeb8;">See the <span style="color:#1fae7e">Slack Docs</span> for detailed tagging information.</div>
<div style="position:absolute;left:1500px;top:1592.2px;width:1322px;height:69.20000000000005px;box-sizing:border-box;background:#02a874;border-radius:12px;"></div>
<div class="t" style="left:2160.9px;transform:translateX(-50%);top:1616.77px;font-size:21.54px;font-weight:700;color:#effff8;">Save Alert Rule</div>
<div style="position:absolute;left:1500px;top:1676.5px;width:1322px;height:68.5px;box-sizing:border-box;border:2px solid #3e434b;border-radius:12px;"></div>
<div class="t" style="left:2160.8px;transform:translateX(-50%);top:1700.53px;font-size:21.35px;font-weight:700;color:#f4f6f8;">Cancel</div>
<div style="position:absolute;left:0px;top:87px;width:2px;height:1692.5px;box-sizing:border-box;background:#181c23;"></div>
<div style="position:absolute;left:0px;top:1779.5px;width:2880px;height:20.5px;box-sizing:border-box;background:#111111;"></div>
</body></html>
